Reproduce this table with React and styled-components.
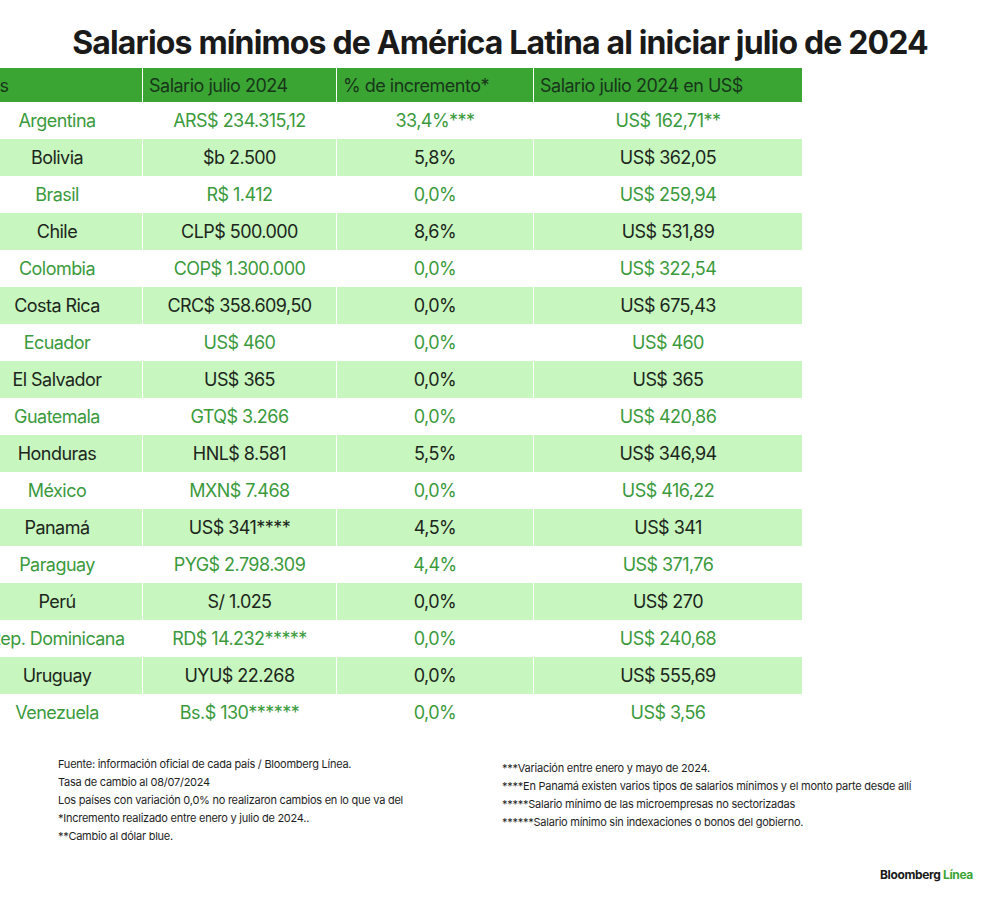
import React from "react";
import styled, { createGlobalStyle } from "styled-components";

const Global = createGlobalStyle`
  html, body { margin: 0; padding: 0; background: #fff; }
  body { font-family: Inter, "Noto Sans", sans-serif; color: #1b1b1b; }
  * { box-sizing: border-box; }
`;

const Page = styled.div`
  width: 1000px;
  height: 902px;
  overflow: hidden;
  background: #fff;
  display: flex;
  flex-direction: column;
`;

const Title = styled.h1`
  margin: 0;
  padding-top: 23px;
  height: 68px;
  text-align: center;
  font-family: Inter, sans-serif;
  font-weight: 700;
  font-size: 32px;
  line-height: 40px;
  letter-spacing: -0.85px;
  color: #1a1a1a;
`;

const Table = styled.div`
  margin-left: -28px;
  width: 830px;
  display: flex;
  flex-direction: column;
`;

const Row = styled.div`
  display: grid;
  grid-template-columns: 170px 193px 196px 268px;
  column-gap: 1px;
  height: ${(p) => (p.$head ? 34 : 37)}px;
`;

const HeadCell = styled.div`
  background: #3ba534;
  color: #17361a;
  font-size: 18px;
  letter-spacing: -0.5px;
  display: flex;
  align-items: center;
  padding-left: ${(p) => (p.$first ? 3 : 6)}px;
  white-space: nowrap;
`;

const Cell = styled.div`
  background: ${(p) => (p.$alt ? "#c7f6be" : "#ffffff")};
  color: ${(p) => (p.$alt ? "#1c261c" : "#3b9a3c")};
  font-size: 18px;
  letter-spacing: -0.55px;
  display: flex;
  align-items: center;
  justify-content: center;
  white-space: nowrap;
`;

const Notes = styled.div`
  display: grid;
  grid-template-columns: 444px 1fr;
  padding: 24px 0 0 58px;
`;

const NoteCol = styled.div`
  display: flex;
  flex-direction: column;
  padding-top: ${(p) => (p.$shift ? 4 : 0)}px;
`;

const Note = styled.div`
  font-size: 11px;
  line-height: 18px;
  letter-spacing: -0.25px;
  color: #1e1e1e;
  white-space: nowrap;
`;

const Logo = styled.div`
  margin-top: auto;
  align-self: flex-end;
  padding: 0 27px 20px 0;
  font-size: 12px;
  font-weight: 700;
  letter-spacing: -0.35px;
  color: #1a1a1a;
  span { color: #3ba534; }
`;

const headers = ["País", "Salario julio 2024", "% de incremento*", "Salario julio 2024 en US$"];

const rows = [
  ["Argentina", "ARS$ 234.315,12", "33,4%***", "US$ 162,71**"],
  ["Bolivia", "$b 2.500", "5,8%", "US$ 362,05"],
  ["Brasil", "R$ 1.412", "0,0%", "US$ 259,94"],
  ["Chile", "CLP$ 500.000", "8,6%", "US$ 531,89"],
  ["Colombia", "COP$ 1.300.000", "0,0%", "US$ 322,54"],
  ["Costa Rica", "CRC$ 358.609,50", "0,0%", "US$ 675,43"],
  ["Ecuador", "US$ 460", "0,0%", "US$ 460"],
  ["El Salvador", "US$ 365", "0,0%", "US$ 365"],
  ["Guatemala", "GTQ$ 3.266", "0,0%", "US$ 420,86"],
  ["Honduras", "HNL$ 8.581", "5,5%", "US$ 346,94"],
  ["México", "MXN$ 7.468", "0,0%", "US$ 416,22"],
  ["Panamá", "US$ 341****", "4,5%", "US$ 341"],
  ["Paraguay", "PYG$ 2.798.309", "4,4%", "US$ 371,76"],
  ["Perú", "S/ 1.025", "0,0%", "US$ 270"],
  ["Rep. Dominicana", "RD$ 14.232*****", "0,0%", "US$ 240,68"],
  ["Uruguay", "UYU$ 22.268", "0,0%", "US$ 555,69"],
  ["Venezuela", "Bs.$ 130******", "0,0%", "US$ 3,56"],
];

const leftNotes = [
  "Fuente: información oficial de cada país / Bloomberg Línea.",
  "Tasa de cambio al 08/07/2024",
  "Los países con variación 0,0% no realizaron cambios en lo que va del",
  "*Incremento realizado entre enero y julio de 2024..",
  "**Cambio al dólar blue.",
];

const rightNotes = [
  "***Variación entre enero y mayo de 2024.",
  "****En Panamá existen varios tipos de salarios mínimos y el monto parte desde allí",
  "*****Salario mínimo de las microempresas no sectorizadas",
  "******Salario mínimo sin indexaciones o bonos del gobierno.",
];

export default function App() {
  return (
    <Page>
      <Global />
      <Title>Salarios mínimos de América Latina al iniciar julio de 2024</Title>
      <Table>
        <Row $head>
          {headers.map((h, i) => (
            <HeadCell key={h} $first={i === 0}>{h}</HeadCell>
          ))}
        </Row>
        {rows.map((r, i) => (
          <Row key={r[0]}>
            {r.map((c, j) => (
              <Cell key={j} $alt={i % 2 === 1}>
                {c}
              </Cell>
            ))}
          </Row>
        ))}
      </Table>
      <Notes>
        <NoteCol>
          {leftNotes.map((n) => (
            <Note key={n}>{n}</Note>
          ))}
        </NoteCol>
        <NoteCol $shift>
          {rightNotes.map((n) => (
            <Note key={n}>{n}</Note>
          ))}
        </NoteCol>
      </Notes>
      <Logo>
        Bloomberg <span>Línea</span>
      </Logo>
    </Page>
  );
}
